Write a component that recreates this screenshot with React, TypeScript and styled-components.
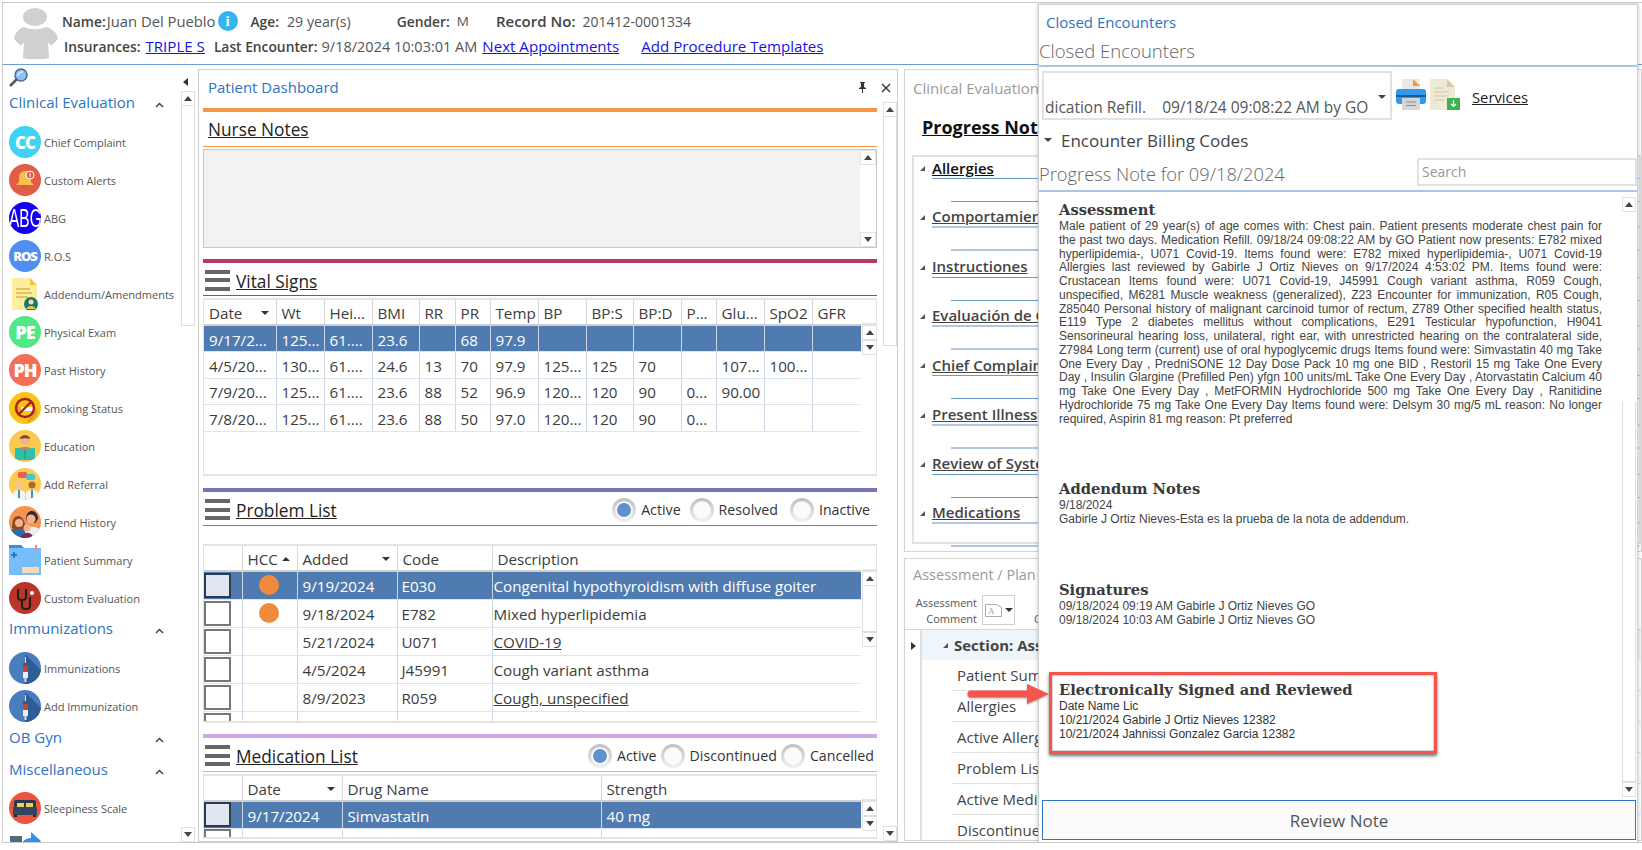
import React from "react";
import styled, { createGlobalStyle } from "styled-components";

const UI = `"Open Sans", "Noto Sans", sans-serif`;

const Global = createGlobalStyle`
  html, body { margin: 0; padding: 0; background: #fff; overflow: hidden; }
  * { box-sizing: border-box; }
`;

const Frame = styled.div`
  position: relative;
  width: 1640px;
  height: 841px;
  margin: 2px 0 0 2px;
  border: 1px solid #c8c8c8;
  border-right: 0;
  display: flex;
  flex-direction: column;
  overflow: hidden;
  font-family: ${UI};
  color: #444;
`;

/* ---------- patient header ---------- */
const Header = styled.header`
  height: 62px;
  flex: none;
  border-bottom: 1px solid #6c9bd2;
  display: flex;
  padding-left: 9px;
  position: relative;
`;
const Avatar = styled.svg`
  width: 46px;
  height: 52px;
  margin-top: 4px;
  flex: none;
`;
const HeaderRows = styled.div`
  margin-left: 4px;
  display: flex;
  flex-direction: column;
`;
const HeaderRow = styled.div<{ $top: number }>`
  display: flex;
  align-items: center;
  margin-top: ${(p) => p.$top}px;
  height: 20px;
  font-size: 14px;
  white-space: nowrap;
  color: #555;
`;
const Label = styled.b<{ $left?: number; $fs?: number }>`
  font-weight: 600;
  font-size: ${(p) => p.$fs ?? 13.8}px;
  color: #444;
  margin-left: ${(p) => p.$left ?? 0}px;
`;
const Val = styled.span<{ $left?: number; $fs?: number }>`
  margin-left: ${(p) => p.$left ?? 0}px;
  font-size: ${(p) => p.$fs ?? 14}px;
`;
const HeaderLink = styled.a<{ $left?: number }>`
  color: #1414e6;
  text-decoration: underline;
  font-size: 15.100px;
  margin-left: ${(p) => p.$left ?? 0}px;
`;
const InfoDot = styled.span`
  width: 20px;
  height: 20px;
  border-radius: 50%;
  background: #35b4ee;
  color: #fff;
  display: inline-flex;
  align-items: center;
  justify-content: center;
  font-family: "Liberation Serif", serif;
  font-size: 15px;
  font-weight: 700;
  margin-left: 2px;
`;

/* ---------- body ---------- */
const Body = styled.div`
  flex: 1;
  min-height: 0;
  display: flex;
`;

/* ---------- scrollbars ---------- */
const Bar = styled.div<{ $w?: number; $offset?: number }>`
  width: ${(p) => p.$w ?? 15}px;
  flex: none;
  display: flex;
  flex-direction: column;
  padding-top: ${(p) => p.$offset ?? 0}px;
`;
const BarBtn = styled.div<{ $dir: "up" | "down" }>`
  height: 15px;
  flex: none;
  background: #fff;
  border: 1px solid #e2e2e2;
  display: flex;
  align-items: center;
  justify-content: center;
  &::after {
    content: "";
    border-left: 4px solid transparent;
    border-right: 4px solid transparent;
    ${(p) =>
      p.$dir === "up"
        ? "border-bottom: 5px solid #444;"
        : "border-top: 5px solid #444;"}
  }
`;
const BarThumb = styled.div<{ $h: number }>`
  height: ${(p) => p.$h}px;
  flex: none;
  background: #fff;
  border: 1px solid #dcdcdc;
  border-top: 0;
`;
const BarGap = styled.div`
  flex: 1;
  min-height: 0;
`;
const BarSpace = styled.div<{ $h: number }>`
  height: ${(p) => p.$h}px;
  flex: none;
`;
const Scroll = ({
  top = 0,
  thumb = 0,
  w,
  offset,
}: {
  top?: number;
  thumb?: number;
  w?: number;
  offset?: number;
}) => (
  <Bar $w={w} $offset={offset}>
    <BarBtn $dir="up" />
    {top > 0 && <BarSpace $h={top} />}
    {thumb > 0 && <BarThumb $h={thumb} />}
    <BarGap />
    <BarBtn $dir="down" />
  </Bar>
);

/* ---------- sidebar ---------- */
const Sidebar = styled.aside`
  width: 192px;
  flex: none;
  display: flex;
  flex-direction: column;
`;
const SideTop = styled.div`
  height: 26px;
  flex: none;
  padding: 3px 0 0 6px;
  display: flex;
  justify-content: space-between;
`;
const CollapseLeft = styled.span`
  width: 0;
  height: 0;
  margin: 10px 7px 0 0;
  border-top: 4px solid transparent;
  border-bottom: 4px solid transparent;
  border-right: 5px solid #333;
`;
const SideMain = styled.div`
  flex: 1;
  min-height: 0;
  display: flex;
`;
const SideList = styled.div`
  flex: 1;
  min-width: 0;
  overflow: hidden;
  padding-left: 6px;
`;
const SideHeading = styled.div<{ $after: number; $before?: number }>`
  height: 22px;
  margin-top: ${(p) => p.$before ?? 0}px;
  margin-bottom: ${(p) => p.$after}px;
  display: flex;
  align-items: center;
  justify-content: space-between;
  color: #2d74c2;
  font-size: 15px;
  padding-right: 17px;
  white-space: nowrap;
`;
const Chevron = styled.svg`
  width: 9px;
  height: 6px;
  margin-top: 5px;
`;
const SideItem = styled.div`
  height: 38px;
  display: flex;
  align-items: center;
  gap: 3px;
  font-size: 11px;
  color: #555;
  white-space: nowrap;
`;
const IconWrap = styled.span<{ $bg?: string; $fs?: number }>`
  width: 32px;
  height: 32px;
  border-radius: ${(p) => (p.$bg ? "50%" : "0")};
  background: ${(p) => p.$bg ?? "transparent"};
  flex: none;
  display: inline-flex;
  align-items: center;
  justify-content: center;
  overflow: hidden;
  color: #fff;
  font-weight: 800;
  font-size: ${(p) => p.$fs ?? 17}px;
  letter-spacing: -1px;
`;
const NarrowText = styled.span`
  display: inline-block;
  font-family: "Liberation Sans", sans-serif;
  font-weight: 400;
  font-size: 25px;
  letter-spacing: 0;
  transform: scaleX(0.62);
`;
const Svg32 = styled.svg`
  width: 32px;
  height: 32px;
  display: block;
`;

const icons: Record<string, React.ReactNode> = {
  cc: <IconWrap $bg="#3fd2f2">CC</IconWrap>,
  bell: (
    <IconWrap $bg="#e25c48">
      <Svg32 viewBox="0 0 32 32">
        <path d="M16 7c-4 0-6 3-6 7v4l-3 3h18l-3-3v-4c0-4-2-7-6-7z" fill="#f8c04a" />
        <path d="M13 21h6l-3 4z" fill="#c9603a" />
        <circle cx="21" cy="11" r="4" fill="#e25c48" stroke="#fff" strokeWidth="1" />
        <rect x="20.5" y="8.8" width="1" height="4.4" fill="#fff" />
      </Svg32>
    </IconWrap>
  ),
  abg: (
    <IconWrap $bg="#1500ee">
      <NarrowText>ABG</NarrowText>
    </IconWrap>
  ),
  ros: <IconWrap $bg="#4f8ff0" $fs={13}>ROS</IconWrap>,
  note: (
    <Svg32 viewBox="0 0 32 32">
      <path d="M3 0h18l7 7v25H3z" fill="#fdee9f" />
      <path d="M21 0l7 7h-7z" fill="#f5c33b" />
      <path d="M7 11h14M7 15h16M7 19h12" stroke="#d8b74e" strokeWidth="1.4" />
      <circle cx="22" cy="26" r="7" fill="#15796f" />
      <circle cx="22" cy="24" r="2.5" fill="#f6d9a8" />
      <path d="M17.5 31c.5-4 8.500-4 9 0z" fill="#f5c33b" />
    </Svg32>
  ),
  pe: <IconWrap $bg="#4fe884" $fs={18}>PE</IconWrap>,
  ph: <IconWrap $bg="#f56f57" $fs={18}>PH</IconWrap>,
  smoke: (
    <IconWrap $bg="#fac315">
      <Svg32 viewBox="0 0 32 32">
        <path d="M20 24l8-8a13 13 0 0 1-10 15z" fill="#e3a32c" />
        <rect x="6" y="15" width="20" height="4" fill="#fff" />
        <rect x="6" y="15" width="6" height="4" fill="#e4a34a" />
        <circle cx="16" cy="16" r="9" fill="none" stroke="#a5201c" strokeWidth="2.4" />
        <path d="M9.500 22.500l13-13" stroke="#a5201c" strokeWidth="2.400" />
      </Svg32>
    </IconWrap>
  ),
  edu: (
    <IconWrap $bg="#fbc94d">
      <Svg32 viewBox="0 0 32 32">
        <path d="M8 30v-8c0-4 4-5 8-5s8 1 8 5v8z" fill="#e8705a" />
        <circle cx="16" cy="10" r="5" fill="#f2b48a" />
        <path d="M11 9c0-5 10-5 10 0-3-1-7-1-10 0z" fill="#7a4a2c" />
        <path d="M6 18c4 0 8 .5 10 2 2-1.500 6-2 10-2v11H6z" fill="#30bfa8" />
        <path d="M16 20v9" stroke="#1f8f7e" />
      </Svg32>
    </IconWrap>
  ),
  ref: (
    <IconWrap $bg="#fbcb52">
      <Svg32 viewBox="0 0 32 32">
        <rect x="9" y="4" width="9" height="6" rx="1.500" fill="#ee5a5a" />
        <rect x="17" y="6" width="9" height="6" rx="2" fill="#4cc3c9" />
        <circle cx="10" cy="17" r="3.500" fill="#f2c29a" />
        <circle cx="23" cy="17" r="3.500" fill="#a8683c" />
        <path d="M4 32v-6c0-3 3-4 6-4s6 1 6 4v6z" fill="#f4f4f4" />
        <path d="M17 32v-6c0-3 3-4 6-4s6 1 6 4v6z" fill="#f4f4f4" />
        <path d="M10 22v8M23 22v8" stroke="#3f97a8" strokeWidth="2" />
      </Svg32>
    </IconWrap>
  ),
  fam: (
    <IconWrap $bg="#f6934e">
      <Svg32 viewBox="0 0 32 32">
        <path d="M17 14c0-7 3-9 6-9s6 3 6 8l-3 4h-6z" fill="#2e2a33" />
        <circle cx="22" cy="13" r="4.500" fill="#f3b48d" />
        <path d="M16 32v-9c0-3 13-3 15 1v8z" fill="#eef0f2" />
        <path d="M3 22c0-8 2-12 6-12s7 4 7 11l-2 3H5z" fill="#8a4a2a" />
        <circle cx="10" cy="17" r="4" fill="#f3b48d" />
        <path d="M1 32v-7c1-3 13-3 15 0v7z" fill="#2e6ea8" />
        <circle cx="18" cy="22" r="3.500" fill="#f3b48d" />
        <path d="M12 32c0-7 12-7 12 0z" fill="#7a2a55" />
      </Svg32>
    </IconWrap>
  ),
  folder: (
    <Svg32 viewBox="0 0 32 32">
      <path d="M0 1h12l3 3h17v27H0z" fill="#75bdfb" />
      <path d="M0 1h12l3 3H0z" fill="#3a8fdc" />
      <path d="M5 8v6M2 11h6" stroke="#2a78c4" strokeWidth="2" />
      <path d="M27 1v6" stroke="#ef8e8e" strokeWidth="2" />
      <rect x="13" y="23" width="17" height="6" fill="#fad9b4" />
    </Svg32>
  ),
  steth: (
    <IconWrap $bg="#b93429">
      <Svg32 viewBox="0 0 32 32">
        <path
          d="M9 7v8c0 4 8 4 8 0V7M13 18v6c0 4 8 4 8 0v-9"
          fill="none"
          stroke="#1e1e1e"
          strokeWidth="2"
        />
        <circle cx="23" cy="11" r="2" fill="#fff" />
      </Svg32>
    </IconWrap>
  ),
  syringe: (
    <IconWrap $bg="#4a7dbd">
      <Svg32 viewBox="0 0 32 32">
        <path d="M16 2l16 16v6a16 16 0 0 1-16 8z" fill="#2e5d96" />
        <rect x="14" y="11" width="5" height="3" fill="#555" />
        <rect x="14" y="14" width="5" height="6" fill="#c8452f" />
        <rect x="14" y="20" width="5" height="6" fill="#eee" />
        <rect x="16" y="5" width="1" height="6" fill="#ddd" />
        <rect x="15.500" y="26" width="2" height="4" fill="#ddd" />
      </Svg32>
    </IconWrap>
  ),
  bed: (
    <IconWrap $bg="#ee5340">
      <Svg32 viewBox="0 0 32 32">
        <rect x="5" y="8" width="22" height="8" rx="2" fill="#263a4d" />
        <rect x="8" y="11" width="7" height="4" fill="#f5cd52" />
        <rect x="17" y="11" width="7" height="4" fill="#f5cd52" />
        <rect x="4" y="15" width="24" height="8" fill="#2f4860" />
        <rect x="5" y="23" width="3" height="2" fill="#222" />
        <rect x="24" y="23" width="3" height="2" fill="#222" />
      </Svg32>
    </IconWrap>
  ),
  share: (
    <Svg32 viewBox="0 0 32 32">
      <path d="M1 6h12v6H7v14h16v6H1z" fill="#546a7b" />
      <path d="M12 18c0-7 5-10 10-10V2l10 9-10 9v-6c-4 0-8 1-10 4z" fill="#2f93ee" />
    </Svg32>
  ),
};

const Chev = () => (
  <Chevron viewBox="0 0 9 6">
    <path d="M1 5l3.500-3.500L8 5" fill="none" stroke="#444" strokeWidth="1.500" />
  </Chevron>
);

type SideGroup = { title: string; after: number; before?: number; items: [string, string][] };
const sideGroups: SideGroup[] = [
  {
    title: "Clinical Evaluation",
    after: 10,
    items: [
      ["cc", "Chief Complaint"],
      ["bell", "Custom Alerts"],
      ["abg", "ABG"],
      ["ros", "R.O.S"],
      ["note", "Addendum/Amendments"],
      ["pe", "Physical Exam"],
      ["ph", "Past History"],
      ["smoke", "Smoking Status"],
      ["edu", "Education"],
      ["ref", "Add Referral"],
      ["fam", "Friend History"],
      ["folder", "Patient Summary"],
      ["steth", "Custom Evaluation"],
    ],
  },
  {
    title: "Immunizations",
    after: 10,
    items: [
      ["syringe", "Immunizations"],
      ["syringe", "Add Immunization"],
    ],
  },
  { title: "OB Gyn", after: 10, before: 1, items: [] },
  {
    title: "Miscellaneous",
    after: 9,
    items: [
      ["bed", "Sleepiness Scale"],
      ["share", "Doctor Consultation"],
    ],
  },
];

/* ---------- dashboard ---------- */
const Dashboard = styled.section`
  width: 700px;
  flex: none;
  margin: 4px 0 0 3px;
  border: 1px solid #cfcfcf;
  display: flex;
`;
const DashContent = styled.div`
  width: 684px;
  flex: none;
  padding-left: 4px;
  padding-right: 6px;
  display: flex;
  flex-direction: column;
`;
const DashTitleRow = styled.div`
  height: 38px;
  flex: none;
  display: flex;
  align-items: center;
  justify-content: space-between;
  padding: 0 0 4px 5px;
  color: #2d74c2;
  font-size: 15px;
  position: relative;
`;
const PinArea = styled.div`
  position: absolute;
  right: -14px;
  top: 12px;
  display: flex;
  align-items: center;
  gap: 14px;
  color: #333;
`;
const CloseX = styled.svg`
  width: 10px;
  height: 10px;
`;
const SectionBar = styled.div<{ $color: string; $top: number }>`
  height: 4px;
  flex: none;
  margin-top: ${(p) => p.$top}px;
  background: ${(p) => p.$color};
`;
const SectionHead = styled.div<{ $color: string; $h: number; $pt?: number }>`
  height: ${(p) => p.$h}px;
  flex: none;
  border-bottom: 1px solid ${(p) => p.$color};
  display: flex;
  align-items: center;
  padding: ${(p) => p.$pt ?? 0}px 0 0 2px;
`;
const Burger = styled.span`
  width: 25px;
  height: 21px;
  flex: none;
  margin-right: 6px;
  border-top: 4px solid #666;
  border-bottom: 4px solid #666;
  position: relative;
  &::after {
    content: "";
    position: absolute;
    left: 0;
    right: 0;
    top: 4.500px;
    height: 4px;
    background: #666;
  }
`;
const SectionTitle = styled.span<{ $left?: number; $pt?: number }>`
  font-size: 17.300px;
  color: #222;
  text-decoration: underline;
  margin-left: ${(p) => p.$left ?? 0}px;
  padding-top: ${(p) => p.$pt ?? 0}px;
`;
const Radios = styled.div<{ $end: number }>`
  margin-left: auto;
  padding: 0 ${(p) => p.$end}px 0 0;
  display: flex;
  align-items: center;
  font-size: 14.200px;
  color: #333;
`;
const Radio = styled.span<{ $on?: boolean; $left: number }>`
  width: 24px;
  height: 24px;
  border-radius: 50%;
  margin-left: ${(p) => p.$left}px;
  margin-right: 5px;
  background: radial-gradient(circle, #fbfbfb 0 8px, rgba(251, 251, 251, 0) 9.500px),
    linear-gradient(#bfbfbf, #f1f1f1);
  display: inline-flex;
  align-items: center;
  justify-content: center;
  &::after {
    content: "";
    width: 14px;
    height: 14px;
    border-radius: 50%;
    background: ${(p) => (p.$on ? "#6190cf" : "transparent")};
  }
`;
const NurseBox = styled.div`
  height: 99px;
  flex: none;
  margin-top: 2px;
  background: #f2f2f2;
  border: 1px solid #c8c8c8;
  display: flex;
  justify-content: flex-end;
`;
const NurseFill = styled.div`
  flex: 1;
`;
const ScrollWhite = styled.div`
  background: #fff;
  display: flex;
`;

/* ---------- tables ---------- */
const TableFrame = styled.div<{ $h: number; $top: number }>`
  height: ${(p) => p.$h}px;
  margin-top: ${(p) => p.$top}px;
  flex: none;
  border: 2px solid #e4e4e4;
  border-width: 2px 1px 2px 1px;
  display: flex;
  overflow: hidden;
`;
const TableArea = styled.div`
  width: 657px;
  flex: none;
  overflow: hidden;
`;
const Grid = styled.table`
  width: 657px;
  table-layout: fixed;
  border-collapse: collapse;
  font-size: 15.200px;
  color: #3c3c3c;
`;
const Th = styled.th<{ $h: number }>`
  height: ${(p) => p.$h}px;
  border-right: 1px solid #d8d8d8;
  border-bottom: 2px solid #cfcfcf;
  font-weight: 400;
  text-align: left;
  padding: 2px 5px 0;
  white-space: nowrap;
  overflow: hidden;
`;
const ThInner = styled.span<{ $spread?: boolean }>`
  display: flex;
  align-items: center;
  justify-content: ${(p) => (p.$spread ? "space-between" : "flex-start")};
  gap: 4px;
`;
const SortMark = styled.i<{ $dir: "up" | "down" }>`
  width: 0;
  height: 0;
  flex: none;
  margin-right: 2px;
  border-left: 4px solid transparent;
  border-right: 4px solid transparent;
  ${(p) =>
    p.$dir === "up" ? "border-bottom: 4px solid #333;" : "border-top: 4px solid #333;"}
`;
const Tr = styled.tr<{ $sel?: boolean }>`
  background: ${(p) => (p.$sel ? "#507bb0" : "#fff")};
  color: ${(p) => (p.$sel ? "#fff" : "#3c3c3c")};
`;
const Td = styled.td<{ $h: number; $pad?: number }>`
  height: ${(p) => p.$h}px;
  padding: 2px 0 0 ${(p) => p.$pad ?? 5}px;
  border-right: 1px solid #cfd8e4;
  border-bottom: 1px solid #dfe5ec;
  white-space: nowrap;
  overflow: hidden;
`;
const Uline = styled.span`
  text-decoration: underline;
`;
const Check = styled.span<{ $sel?: boolean }>`
  display: block;
  width: 27px;
  height: 25px;
  margin: -2px 0 0 -3px;
  border: 2px solid ${(p) => (p.$sel ? "#2a3a50" : "#777")};
  background: ${(p) => (p.$sel ? "#dfe6ef" : "#fff")};
`;
const Dot = styled.span`
  display: block;
  width: 20px;
  height: 20px;
  margin: -2px 0 0 16px;
  border-radius: 50%;
  background: #f08b3d;
`;
const ScrollCol = styled.div`
  flex: 1;
  display: flex;
  flex-direction: column;
  padding-left: 1px;
`;
const ScrollHead = styled.div<{ $h: number }>`
  height: ${(p) => p.$h}px;
  flex: none;
  border-bottom: 2px solid #e4e4e4;
`;

type Head = { label: string; sort?: "up" | "down"; spread?: boolean };
const ColW = styled.col<{ $w: number }>`
  width: ${(p) => p.$w}px;
`;
function DataTable(props: {
  cols: number[];
  heads: Head[];
  rows: React.ReactNode[][];
  headH: number;
  rowH: number;
  frameH: number;
  top: number;
  pads?: number[];
  thumb?: number;
}) {
  const { cols, heads, rows, headH, rowH, frameH, top, pads, thumb } = props;
  return (
    <TableFrame $h={frameH} $top={top}>
      <TableArea>
        <Grid>
          <colgroup>
            {cols.map((c, i) => (
              <ColW key={i} $w={c} />
            ))}
          </colgroup>
          <thead>
            <tr>
              {heads.map((h, i) => (
                <Th key={i} $h={headH}>
                  <ThInner $spread={h.spread}>
                    {h.label}
                    {h.sort && <SortMark $dir={h.sort} />}
                  </ThInner>
                </Th>
              ))}
            </tr>
          </thead>
          <tbody>
            {rows.map((r, i) => (
              <Tr key={i} $sel={i === 0}>
                {r.map((c, j) => (
                  <Td key={j} $h={rowH} $pad={pads?.[j]}>
                    {c}
                  </Td>
                ))}
              </Tr>
            ))}
          </tbody>
        </Grid>
      </TableArea>
      <ScrollCol>
        <ScrollHead $h={headH} />
        <Scroll w={15} thumb={thumb} />
      </ScrollCol>
    </TableFrame>
  );
}

const vitals = [
  ["9/17/2...", "125...", "61....", "23.6", "", "68", "97.9", "", "", "", "", "", "", ""],
  ["4/5/20...", "130...", "61....", "24.6", "13", "70", "97.9", "125...", "125", "70", "", "107...", "100...", ""],
  ["7/9/20...", "125...", "61....", "23.6", "88", "52", "96.9", "120...", "120", "90", "0...", "90.00", "", ""],
  ["7/8/20...", "125...", "61....", "23.6", "88", "50", "97.0", "120...", "120", "90", "0...", "", "", ""],
];
const problems: [string, string, React.ReactNode, boolean][] = [
  ["9/19/2024", "E030", "Congenital hypothyroidism with diffuse goiter", true],
  ["9/18/2024", "E782", "Mixed hyperlipidemia", true],
  ["5/21/2024", "U071", <Uline>COVID-19</Uline>, false],
  ["4/5/2024", "J45991", "Cough variant asthma", false],
  ["8/9/2023", "R059", <Uline>Cough, unspecified</Uline>, false],
  ["5/11/2023", "M6281", "Muscle weakness (generalized)", false],
];
const meds = [
  ["9/17/2024", "Simvastatin", "40 mg"],
  ["4/5/2024", "Insulin Glargine (Prefilled Pen)", "yfgn 100 units/mL"],
];

/* ---------- right column ---------- */
const RightCol = styled.div`
  flex: 1;
  min-width: 0;
  margin: 4px 0 0 6px;
  display: flex;
  flex-direction: column;
`;
const ClinicalPanel = styled.section`
  height: 483px;
  flex: none;
  border: 1px solid #d4d4d4;
  display: flex;
  flex-direction: column;
  overflow: hidden;
`;
const GreyTitle = styled.div`
  height: 36px;
  flex: none;
  display: flex;
  align-items: center;
  padding-left: 8px;
  color: #9a9a9a;
  font-size: 15px;
  white-space: nowrap;
`;
const ProgressTitle = styled.div`
  height: 49px;
  flex: none;
  padding: 9px 0 0 17px;
  font-size: 18px;
  font-weight: 700;
  color: #111;
  text-decoration: underline;
  white-space: nowrap;
`;
const SectionsBox = styled.div`
  height: 389px;
  margin-left: 7px;
  border: 2px solid #e2e2e2;
  flex: none;
`;
const NoteRow = styled.div`
  height: 49.330px;
  padding-left: 18px;
  position: relative;
  &:nth-child(even) > div:first-of-type {
    border-bottom: 2px solid #b2c8e2;
  }
  &:nth-child(even) > div:last-of-type {
    border-bottom: 2px solid #b2c8e2;
  }
`;
const NoteHead = styled.div<{ $strong?: boolean }>`
  height: 22px;
  border-bottom: 1px solid #6c9bd2;
  display: flex;
  align-items: center;
  font-size: 15px;
  font-weight: 600;
  color: ${(p) => (p.$strong ? "#111" : "#444")};
  white-space: nowrap;
  span {
    text-decoration: underline;
  }
`;
const Tri = styled.i`
  position: absolute;
  left: 6px;
  top: 9px;
  width: 0;
  height: 0;
  border-left: 5px solid transparent;
  border-bottom: 5px solid #555;
`;
const NoteLine = styled.div`
  height: 23px;
  margin-left: 19px;
  border-bottom: 1px solid #6c9bd2;
`;

const AssessPanel = styled.section`
  height: 283px;
  flex: none;
  margin-top: 6px;
  border: 1px solid #d4d4d4;
  display: flex;
  flex-direction: column;
  overflow: hidden;
`;
const AssessTitle = styled(GreyTitle)`
  font-size: 14.500px;
  height: 33px;
  padding-bottom: 2px;
`;
const AssessTools = styled.div`
  height: 38px;
  flex: none;
  display: flex;
  align-items: flex-start;
  border-bottom: 1px solid #d8d8d8;
  padding-top: 3px;
`;
const ToolLabel = styled.div`
  width: 72px;
  flex: none;
  text-align: right;
  font-size: 11px;
  line-height: 16px;
  color: #555;
`;
const ToolBtn = styled.div`
  width: 33px;
  height: 30px;
  margin-left: 5px;
  border: 1px solid #cfcfcf;
  display: flex;
  align-items: center;
  justify-content: center;
  gap: 3px;
  flex: none;
`;
const ToolDrop = styled.i`
  width: 0;
  height: 0;
  border-left: 4px solid transparent;
  border-right: 4px solid transparent;
  border-top: 4px solid #333;
`;
const ToolNext = styled(ToolLabel)`
  width: auto;
  margin-left: 19px;
  padding-top: 16px;
  white-space: nowrap;
`;
const TreeGrid = styled.div`
  flex: 1;
  display: flex;
  min-height: 0;
`;
const TreeGutter = styled.div`
  width: 17px;
  flex: none;
  border-right: 2px solid #e0e0e0;
  padding: 12px 0 0 6px;
`;
const RightTri = styled.i`
  display: block;
  width: 0;
  height: 0;
  border-top: 4px solid transparent;
  border-bottom: 4px solid transparent;
  border-left: 5px solid #333;
`;
const TreeBody = styled.div`
  flex: 1;
  min-width: 0;
`;
const TreeSection = styled.div`
  height: 30px;
  background: #eef5fb;
  display: flex;
  align-items: center;
  padding-left: 21px;
  gap: 6px;
  font-size: 15px;
  font-weight: 700;
  color: #444;
  white-space: nowrap;
`;
const DownTri = styled.i`
  width: 0;
  height: 0;
  border-left: 5px solid transparent;
  border-bottom: 5px solid #555;
`;
const TreeRow = styled.div`
  height: 31px;
  margin-left: 30px;
  padding-left: 5px;
  display: flex;
  align-items: center;
  font-size: 15px;
  color: #444;
  border-bottom: 1px solid #e2e2e2;
  white-space: nowrap;
`;

/* ---------- modal ---------- */
const Modal = styled.div`
  position: absolute;
  left: 1035px;
  top: 1px;
  width: 600px;
  height: 839px;
  background: #fff;
  border: 1px solid #d0d0d0;
  box-shadow: 0 0 4px rgba(0, 0, 0, 0.25);
  display: flex;
  flex-direction: column;
`;
const ModalTitle = styled.div`
  height: 32px;
  flex: none;
  padding: 7px 0 0 7px;
  font-size: 15px;
  color: #2d74c2;
`;
const ModalSub = styled.div`
  height: 30px;
  flex: none;
  border-bottom: 2px solid #a9c6e6;
  font-size: 18.500px;
  font-weight: 300;
  line-height: 27px;
  color: #666;
`;
const ComboRow = styled.div`
  height: 49px;
  margin: 4px 0 0 3px;
  flex: none;
  display: flex;
  align-items: center;
`;
const Combo = styled.div`
  width: 350px;
  height: 49px;
  flex: none;
  border: 2px solid #e2e2e2;
  position: relative;
  padding: 23px 0 0 1px;
  font-size: 15.500px;
  color: #555;
  white-space: pre;
`;
const ComboDrop = styled.i`
  position: absolute;
  right: 4px;
  top: 22px;
  width: 0;
  height: 0;
  border-left: 4px solid transparent;
  border-right: 4px solid transparent;
  border-top: 4px solid #444;
`;
const ToolIcon = styled.svg<{ $left: number }>`
  width: 30px;
  height: 31px;
  margin-left: ${(p) => p.$left}px;
  margin-top: -2px;
  flex: none;
`;
const ServicesLink = styled.a`
  margin: 3px 0 0 12px;
  font-size: 14.800px;
  color: #222;
  text-decoration: underline;
`;
const BillingRow = styled.div`
  height: 32px;
  margin: 4px 0 2px;
  flex: none;
  display: flex;
  align-items: center;
  padding-left: 5px;
  gap: 9px;
  font-size: 17px;
  color: #444;
`;
const BillTri = styled.i`
  width: 0;
  height: 0;
  border-left: 4px solid transparent;
  border-right: 4px solid transparent;
  border-top: 4px solid #444;
`;
const NoteTitleRow = styled.div`
  height: 34px;
  flex: none;
  border-bottom: 2px solid #a9c6e6;
  display: flex;
  justify-content: space-between;
  font-size: 18.300px;
  font-weight: 300;
  color: #666;
  line-height: 31px;
`;
const SearchBox = styled.div`
  width: 220px;
  height: 28px;
  margin-right: 0;
  border: 2px solid #e2e2e2;
  font-size: 14px;
  font-weight: 400;
  line-height: 24px;
  padding-left: 3px;
  color: #9a9a9a;
`;
const NoteBody = styled.div`
  flex: 1;
  min-height: 0;
  display: flex;
`;
const NoteScroll = styled.div`
  width: 583px;
  flex: none;
  padding: 8px 0 0 20px;
  color: #444;
`;
const NoteH = styled.div`
  font-family: "DejaVu Serif", "Liberation Serif", serif;
  font-weight: 700;
  font-size: 14.700px;
  line-height: 20px;
  color: #3a3a3a;
  white-space: nowrap;
`;
const NoteP = styled.div`
  font-family: "Liberation Sans", Arial, sans-serif;
  font-size: 12px;
  line-height: 13.750px;
  width: 543px;
  text-align: justify;
`;
const NoteBlock = styled.div<{ $top: number }>`
  margin-top: ${(p) => p.$top}px;
`;
const RedBox = styled.div`
  margin: 45px 0 0 -10px;
  width: 388px;
  height: 82px;
  padding: 5px 0 0 7px;
  border: 3px solid #f5554d;
  box-shadow: 0 2px 3px rgba(0, 0, 0, 0.55), inset 0 0 2px rgba(0, 0, 0, 0.6);
  color: #333;
`;
const ModalBar = styled.div`
  display: flex;
  margin: 5px 0 6px 0;
`;
const ReviewBtn = styled.div`
  height: 40px;
  flex: none;
  margin: 0 1px 2px 3px;
  border: 1px solid #2f77c4;
  background: #fbfbfb;
  display: flex;
  align-items: center;
  justify-content: center;
  font-size: 17px;
  color: #555;
`;
const Arrow = styled.svg`
  position: absolute;
  left: 962px;
  top: 679px;
  width: 84px;
  height: 24px;
  filter: drop-shadow(0 1px 1px rgba(0, 0, 0, 0.3));
`;

export default function App() {
  return (
    <>
      <Global />
      <Frame>
        <Header>
          <Avatar viewBox="0 0 46 52">
            <ellipse cx="23" cy="10" rx="12" ry="9" fill="#d0d0d0" />
            <path
              d="M12 20c6 3 16 3 22 0 6 1 11 6 12 12l-7 7-3-4 1 16c-7 2-19 2-26 0l1-16-3 4-7-7c1-6 5-11 10-12z"
              fill="#d0d0d0"
            />
          </Avatar>
          <HeaderRows>
            <HeaderRow $top={8}>
              <Label>Name:</Label>
              <Val $left={1} $fs={14.800}>Juan Del Pueblo</Val>
              <InfoDot>i</InfoDot>
              <Label $left={13}>Age:</Label>
              <Val $left={8} $fs={14.200}>29 year(s)</Val>
              <Label $left={46}>Gender:</Label>
              <Val $left={7} $fs={13.500}>M</Val>
              <Label $left={27} $fs={15}>Record No:</Label>
              <Val $left={7} $fs={14}>201412-0001334</Val>
            </HeaderRow>
            <HeaderRow $top={5}>
              <Label $left={2}>Insurances:</Label>
              <HeaderLink $left={5}>TRIPLE S</HeaderLink>
              <Label $left={9}>Last Encounter:</Label>
              <Val $left={4} $fs={14.500}>9/18/2024 10:03:01 AM</Val>
              <HeaderLink $left={5}>Next Appointments</HeaderLink>
              <HeaderLink $left={22}>Add Procedure Templates</HeaderLink>
            </HeaderRow>
          </HeaderRows>
        </Header>
        <Body>
          <Sidebar>
            <SideTop>
              <svg width="20" height="20" viewBox="0 0 20 20">
                <path d="M8 11l-7 7" stroke="#555" strokeWidth="2.500" />
                <circle cx="12" cy="7" r="6" fill="#8fc0f5" stroke="#4a6a8a" strokeWidth="1.500" />
                <path d="M9 8c0-3 2-4 5-4" stroke="#dcecff" strokeWidth="1.500" fill="none" />
              </svg>
              <CollapseLeft />
            </SideTop>
            <SideMain>
              <SideList>
                {sideGroups.map((g) => (
                  <React.Fragment key={g.title}>
                    <SideHeading $after={g.after} $before={g.before}>
                      {g.title}
                      <Chev />
                    </SideHeading>
                    {g.items.map(([icon, label], i) => (
                      <SideItem key={label + i}>
                        {icons[icon]}
                        {label}
                      </SideItem>
                    ))}
                  </React.Fragment>
                ))}
              </SideList>
              <Scroll w={14} thumb={220} />
            </SideMain>
          </Sidebar>

          <Dashboard>
            <DashContent>
              <DashTitleRow>
                Patient Dashboard
                <PinArea>
                  <svg width="9" height="11" viewBox="0 0 9 11">
                    <path d="M2 0h5v1H6v4l2 1v1H5v4H4V7H1V6l2-1V1H2z" fill="#333" />
                  </svg>
                  <CloseX viewBox="0 0 10 10">
                    <path d="M1 1l8 8M9 1l-8 8" stroke="#333" strokeWidth="1.400" />
                  </CloseX>
                </PinArea>
              </DashTitleRow>
              <SectionBar $color="#f79646" $top={0} />
              <SectionHead $color="#f79646" $h={35}>
                <SectionTitle $left={3}>Nurse Notes</SectionTitle>
              </SectionHead>
              <NurseBox>
                <NurseFill />
                <ScrollWhite>
                  <Scroll w={16} />
                </ScrollWhite>
              </NurseBox>

              <SectionBar $color="#b83b5e" $top={11} />
              <SectionHead $color="#b83b5e" $h={33} $pt={2}>
                <Burger />
                <SectionTitle $pt={2}>Vital Signs</SectionTitle>
              </SectionHead>
              <DataTable
                top={2}
                frameH={178}
                headH={25}
                rowH={26.600}
                cols={[72, 48, 48, 47, 36, 35, 48, 48, 47, 48, 35, 48, 48, 49]}
                heads={[
                  { label: "Date", sort: "down", spread: true },
                  { label: "Wt" },
                  { label: "Hei..." },
                  { label: "BMI" },
                  { label: "RR" },
                  { label: "PR" },
                  { label: "Temp" },
                  { label: "BP" },
                  { label: "BP:S" },
                  { label: "BP:D" },
                  { label: "P..." },
                  { label: "Glu..." },
                  { label: "SpO2" },
                  { label: "GFR" },
                ]}
                rows={vitals}
              />

              <SectionBar $color="#7575b8" $top={12} />
              <SectionHead $color="#7575b8" $h={34} $pt={2}>
                <Burger />
                <SectionTitle $pt={2}>Problem List</SectionTitle>
                <Radios $end={7}>
                  <Radio $on $left={0} />
                  Active
                  <Radio $left={9} />
                  Resolved
                  <Radio $left={12} />
                  Inactive
                </Radios>
              </SectionHead>
              <DataTable
                top={18}
                frameH={179}
                headH={25}
                rowH={28}
                cols={[38, 55, 100, 95, 369]}
                pads={[3, 0, 5, 4, 1]}
                thumb={46}
                heads={[
                  { label: "" },
                  { label: "HCC", sort: "up" },
                  { label: "Added", sort: "down", spread: true },
                  { label: "Code" },
                  { label: "Description" },
                ]}
                rows={problems.map(([d, c, t, dot], i) => [
                  <Check $sel={i === 0} />,
                  dot ? <Dot /> : "",
                  d,
                  c,
                  t,
                ])}
              />

              <SectionBar $color="#c9a9e8" $top={11} />
              <SectionHead $color="#c9a9e8" $h={34} $pt={2}>
                <Burger />
                <SectionTitle $pt={2}>Medication List</SectionTitle>
                <Radios $end={3}>
                  <Radio $on $left={0} />
                  Active
                  <Radio $left={4} />
                  Discontinued
                  <Radio $left={4} />
                  Cancelled
                </Radios>
              </SectionHead>
              <DataTable
                top={2}
                frameH={65}
                headH={25}
                rowH={27}
                cols={[38, 100, 259, 260]}
                pads={[3, 5, 5, 5]}
                heads={[
                  { label: "" },
                  { label: "Date", sort: "down", spread: true },
                  { label: "Drug Name" },
                  { label: "Strength" },
                ]}
                rows={meds.map(([d, n, s], i) => [<Check $sel={i === 0} />, d, n, s])}
              />
            </DashContent>
            <Scroll w={14} offset={32} thumb={229} />
          </Dashboard>

          <RightCol>
            <ClinicalPanel>
              <GreyTitle>Clinical Evaluation</GreyTitle>
              <ProgressTitle>Progress Notes</ProgressTitle>
              <SectionsBox>
                {[
                  "Allergies",
                  "Comportamiento",
                  "Instructiones",
                  "Evaluación de Comportamiento",
                  "Chief Complaint",
                  "Present Illness",
                  "Review of Systems",
                  "Medications",
                ].map((t, i) => (
                  <NoteRow key={t}>
                    <Tri />
                    <NoteHead $strong={i === 0}>
                      <span>{t}</span>
                    </NoteHead>
                    <NoteLine />
                  </NoteRow>
                ))}
              </SectionsBox>
            </ClinicalPanel>
            <AssessPanel>
              <AssessTitle>Assessment / Plan</AssessTitle>
              <AssessTools>
                <ToolLabel>
                  Assessment
                  <br />
                  Comment
                </ToolLabel>
                <ToolBtn>
                  <svg width="17" height="13" viewBox="0 0 17 13">
                    <path d="M.500.500h11l5 3v9H.500z" fill="#fff" stroke="#aaa" />
                    <text x="3" y="10" fontSize="9" fontFamily="Liberation Serif" fill="#999">
                      A
                    </text>
                  </svg>
                  <ToolDrop />
                </ToolBtn>
                <ToolNext>Comment</ToolNext>
              </AssessTools>
              <TreeGrid>
                <TreeGutter>
                  <RightTri />
                </TreeGutter>
                <TreeBody>
                  <TreeSection>
                    <DownTri />
                    Section: Assessment
                  </TreeSection>
                  {[
                    "Patient Summary",
                    "Allergies",
                    "Active Allergies",
                    "Problem List",
                    "Active Medications",
                    "Discontinued",
                  ].map((t) => (
                    <TreeRow key={t}>{t}</TreeRow>
                  ))}
                </TreeBody>
              </TreeGrid>
            </AssessPanel>
          </RightCol>
        </Body>

        <Modal>
          <ModalTitle>Closed Encounters</ModalTitle>
          <ModalSub>Closed Encounters</ModalSub>
          <ComboRow>
            <Combo>
              {"dication Refill.    09/18/24 09:08:22 AM by GO"}
              <ComboDrop />
            </Combo>
            <ToolIcon $left={4} viewBox="0 0 30 31">
              <rect x="6" y="0" width="18" height="12" fill="#e8e8e8" />
              <path d="M17 0l7 7h-7z" fill="#f59a23" />
              <rect x="0" y="10" width="30" height="15" rx="3" fill="#2f9bee" />
              <rect x="0" y="16" width="30" height="2" fill="#1b5d92" />
              <rect x="6" y="19" width="18" height="12" fill="#d6d6d6" />
              <path d="M10 23h10M10 26.500h10" stroke="#888" />
            </ToolIcon>
            <ToolIcon $left={4} viewBox="0 0 30 31">
              <path d="M0 0h17l8 8v23H0z" fill="#efead6" />
              <path d="M17 0l8 8h-8z" fill="#d5cdb0" />
              <path d="M4 9h10M4 13h15M4 17h15M4 21h10" stroke="#d0c8ad" />
              <rect x="17" y="19" width="13" height="12" fill="#3fb24f" />
              <path d="M23.500 21v6M21 25l2.500 2.500L26 25" stroke="#fff" fill="none" strokeWidth="1.200" />
            </ToolIcon>
            <ServicesLink>Services</ServicesLink>
          </ComboRow>
          <BillingRow>
            <BillTri />
            Encounter Billing Codes
          </BillingRow>
          <NoteTitleRow>
            Progress Note for 09/18/2024
            <SearchBox>Search</SearchBox>
          </NoteTitleRow>
          <NoteBody>
            <NoteScroll>
              <NoteH>Assessment</NoteH>
              <NoteP>
                Male patient of 29 year(s) of age comes with: Chest pain. Patient presents moderate
                chest pain for {"the\u00a0past"} two days. Medication Refill. 09/18/24 09:08:22 AM by GO
                Patient now presents: E782 mixed hyperlipidemia-, U071 Covid-19. Items found were:
                E782 mixed hyperlipidemia-, U071 Covid-19 Allergies last reviewed by Gabirle J Ortiz
                Nieves on 9/17/2024 4:53:02 PM. Items found were: Crustacean Items found were: U071
                Covid-19, J45991 Cough variant asthma, R059 Cough, unspecified, M6281 Muscle weakness
                (generalized), Z23 Encounter for immunization, R05 Cough, Z85040 Personal history of
                malignant carcinoid tumor of rectum, Z789 Other specified health status, E119 Type 2
                diabetes mellitus without complications, E291 Testicular hypofunction, H9041
                Sensorineural hearing loss, unilateral, right ear, with unrestricted hearing on the
                contralateral side, Z7984 Long term (current) use of oral hypoglycemic drugs Items
                found were: Simvastatin 40 mg Take One Every Day , PredniSONE 12 Day Dose Pack 10 mg
                one BID , Restoril 15 mg Take One Every Day , Insulin Glargine (Prefilled Pen) yfgn
                100 units/mL Take One Every Day , Atorvastatin Calcium 40 mg Take One Every Day ,
                MetFORMIN Hydrochloride 500 mg Take One Every Day , Ranitidine Hydrochloride 75 mg
                Take One Every Day Items found were: Delsym 30 mg/5 mL reason: No longer required,
                Aspirin 81 mg reason: Pt preferred
              </NoteP>
              <NoteBlock $top={53}>
                <NoteH>Addendum Notes</NoteH>
                <NoteP>
                  9/18/2024
                  <br />
                  Gabirle J Ortiz Nieves-Esta es la prueba de la nota de addendum.
                </NoteP>
              </NoteBlock>
              <NoteBlock $top={53}>
                <NoteH>Signatures</NoteH>
                <NoteP>
                  09/18/2024 09:19 AM Gabirle J Ortiz Nieves GO
                  <br />
                  09/18/2024 10:03 AM Gabirle J Ortiz Nieves GO
                </NoteP>
              </NoteBlock>
              <RedBox>
                <NoteH>Electronically Signed and Reviewed</NoteH>
                <NoteP>
                  Date Name Lic
                  <br />
                  10/21/2024 Gabirle J Ortiz Nieves 12382
                  <br />
                  10/21/2024 Jahnissi Gonzalez Garcia 12382
                </NoteP>
              </RedBox>
            </NoteScroll>
            <ModalBar>
              <Scroll w={14} top={190} thumb={380} />
            </ModalBar>
          </NoteBody>
          <ReviewBtn>Review Note</ReviewBtn>
        </Modal>

        <Arrow viewBox="0 0 84 24">
          <path d="M6 8.500h56V2l22 10-22 10v-6.500H6a3.500 3.500 0 0 1 0-7z" fill="#f5554d" />
        </Arrow>
      </Frame>
    </>
  );
}
